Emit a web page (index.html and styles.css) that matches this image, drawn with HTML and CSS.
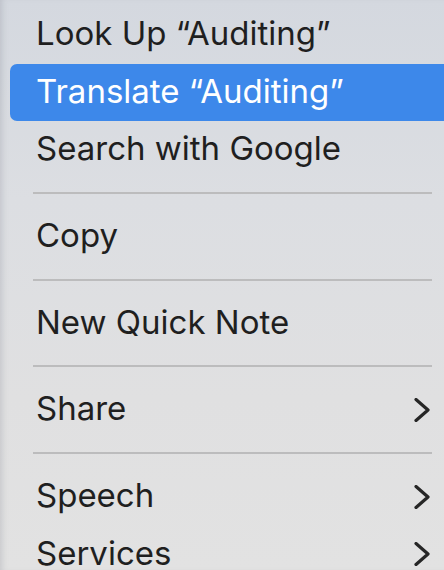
FILE: index.html
```html
<!DOCTYPE html>
<html lang="en">
<head>
<meta charset="utf-8">
<title>Context menu</title>
<link rel="stylesheet" href="styles.css">
</head>
<body>
<div class="menu">
  <div class="item"><span class="label">Look Up “Auditing”</span></div>
  <div class="item active"><span class="label">Translate “Auditing”</span></div>
  <div class="item"><span class="label">Search with Google</span></div>
  <div class="sep"></div>
  <div class="item"><span class="label">Copy</span></div>
  <div class="sep"></div>
  <div class="item"><span class="label">New Quick Note</span></div>
  <div class="sep"></div>
  <div class="item"><span class="label">Share</span>
    <svg class="chev" viewBox="0 0 16 24"><polyline points="2,1.5 14,12 2,22.5"/></svg>
  </div>
  <div class="sep"></div>
  <div class="item"><span class="label">Speech</span>
    <svg class="chev" viewBox="0 0 16 24"><polyline points="2,1.5 14,12 2,22.5"/></svg>
  </div>
  <div class="item"><span class="label">Services</span>
    <svg class="chev" viewBox="0 0 16 24"><polyline points="2,1.5 14,12 2,22.5"/></svg>
  </div>
</div>
</body>
</html>
```
FILE: styles.css
```css
html, body {
  margin: 0;
  padding: 0;
  width: 444px;
  height: 570px;
  overflow: hidden;
}

body {
  background: linear-gradient(180deg, #d4d8df 0%, #dcdee2 35%, #e0e0e1 70%, #e2e2e2 100%);
  font-family: Inter, "Noto Sans", sans-serif;
  color: #1f1f1f;
}

/* menu panel; its right edge continues past the window */
.menu {
  width: 444px;
  height: 570px;
  padding: 6px 0 0 10px;
  display: flex;
  flex-direction: column;
  box-shadow: inset 6px 0 6px -4px rgba(120, 125, 135, 0.25);
  box-sizing: border-box;
  overflow: hidden;
}

.item {
  flex: none;
  height: 57.5px;
  display: flex;
  align-items: center;
  padding-left: 26px;
  padding-right: 14px;
  font-size: 33px;
  line-height: 1;
}

.item .label {
  flex: 1;
  padding-bottom: 2px;
  white-space: nowrap;
}

.item.active {
  background: #3d88ea;
  color: #ffffff;
  border-radius: 7px 0 0 7px;
}

.sep {
  flex: none;
  height: 29.2px;
  display: flex;
  align-items: center;
  padding-left: 23px;
  width: 399px;
}

.sep::after {
  content: "";
  display: block;
  width: 100%;
  height: 2px;
  background: #bcbcbd;
}

.chev {
  flex: none;
  width: 16px;
  height: 24px;
  fill: none;
  stroke: #262626;
  stroke-width: 3.2;
  stroke-linecap: round;
  stroke-linejoin: round;
}
```
